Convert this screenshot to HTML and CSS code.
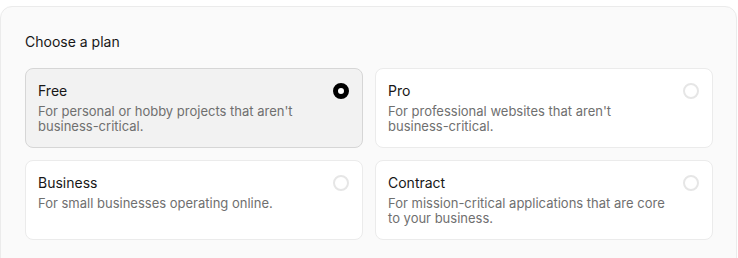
FILE: index.html
```html
<!DOCTYPE html>
<html lang="en">
<head>
<meta charset="utf-8">
<title>Choose a plan</title>
<link rel="stylesheet" href="styles.css">
</head>
<body>
<div class="page">
  <section class="panel">
    <h2 class="heading">Choose a plan</h2>
    <div class="plans" role="radiogroup">
      <label class="plan plan--selected">
        <div class="plan-text">
          <div class="plan-title">Free</div>
          <div class="plan-desc">For personal or hobby projects that aren't <span class="nowrap">business-critical.</span></div>
        </div>
        <span class="radio radio--checked"></span>
      </label>
      <label class="plan">
        <div class="plan-text">
          <div class="plan-title">Pro</div>
          <div class="plan-desc">For professional websites that aren't <span class="nowrap">business-critical.</span></div>
        </div>
        <span class="radio"></span>
      </label>
      <label class="plan">
        <div class="plan-text">
          <div class="plan-title">Business</div>
          <div class="plan-desc">For small businesses operating online.</div>
        </div>
        <span class="radio"></span>
      </label>
      <label class="plan">
        <div class="plan-text">
          <div class="plan-title">Contract</div>
          <div class="plan-desc">For mission-critical applications that are core to your business.</div>
        </div>
        <span class="radio"></span>
      </label>
    </div>
  </section>
</div>
</body>
</html>
```

FILE: styles.css
```css
* { box-sizing: border-box; }

html, body {
  margin: 0;
  padding: 0;
  background: #ffffff;
  font-family: Inter, "Noto Sans", "Liberation Sans", sans-serif;
  color: #171717;
}

.page {
  padding: 6px 1px 0 0;
}

.panel {
  background: #fafafa;
  border: 1px solid #ebebeb;
  border-radius: 12px;
  padding: 25px 23px 30px 24px;
}

.heading {
  margin: 0 0 16px;
  font-size: 14px;
  line-height: 20px;
  font-weight: 400;
  color: #171717;
}

.plans {
  display: grid;
  grid-template-columns: 1fr 1fr;
  gap: 12px;
}

.plan {
  display: flex;
  align-items: flex-start;
  gap: 12px;
  background: #ffffff;
  border: 1px solid #ebebeb;
  border-radius: 8px;
  padding: 12px 13px 13px 12px;
  cursor: pointer;
}

.plan--selected {
  background: #f2f2f2;
  border-color: #d6d6d6;
}

.plan-text {
  flex: 1;
  min-width: 0;
}

.plan-title {
  font-size: 14px;
  line-height: 20px;
  color: #171717;
}

.plan-desc {
  margin-top: 3px;
  font-size: 13px;
  line-height: 15px;
  color: #6f6f6f;
}

.nowrap {
  white-space: nowrap;
}

.radio {
  flex: none;
  width: 16px;
  height: 16px;
  margin-top: 2px;
  border-radius: 50%;
  border: 2px solid #e6e6e6;
  background: #ffffff;
}

.radio--checked {
  border: 5px solid #000000;
  background: #ffffff;
}
```
